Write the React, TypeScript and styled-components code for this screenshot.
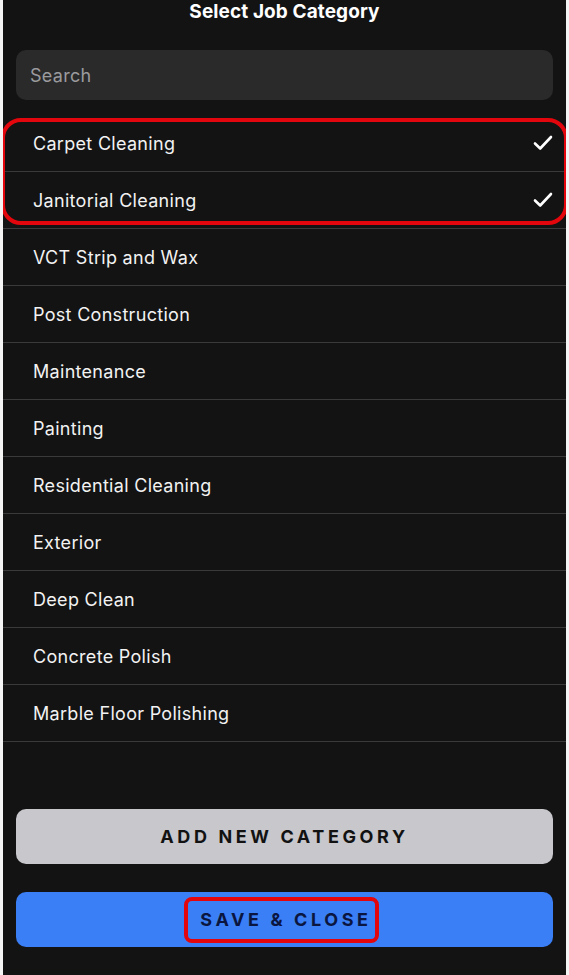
import React from "react";
import styled, { createGlobalStyle } from "styled-components";

const Global = createGlobalStyle`
  html, body { margin: 0; padding: 0; background: #f4f4f4; }
  body { font-family: Inter, "Noto Sans", sans-serif; -webkit-font-smoothing: antialiased; }
`;

const Panel = styled.div`
  margin: 0 3px;
  height: 975px;
  background: #131313;
  display: flex;
  flex-direction: column;
  overflow: hidden;
`;

const Title = styled.div`
  height: 24px;
  line-height: 24px;
  text-align: center;
  color: #ffffff;
  font-size: 19px;
  font-weight: 700;
  letter-spacing: 0.1px;
`;

const Search = styled.div`
  margin: 26px 13px 0;
  height: 50px;
  border-radius: 10px;
  background: #2a2a2b;
  display: flex;
  align-items: center;
  padding: 0 14px;
  color: #9b9b9e;
  font-size: 18px;
  letter-spacing: 0.3px;
`;

const List = styled.div`
  margin-top: 15px;
  display: flex;
  flex-direction: column;
`;

const Group = styled.div`
  position: relative;
  display: flex;
  flex-direction: column;
`;

const Row = styled.div`
  height: 56px;
  border-bottom: 1px solid #3a3a3c;
  display: flex;
  align-items: center;
  justify-content: space-between;
  padding: 0 13px 0 30px;
  color: #f2f2f2;
  font-size: 18px;
  letter-spacing: 0.3px;
`;

const Highlight = styled.div`
  position: absolute;
  top: 3px;
  left: -2px;
  right: -2px;
  height: 99px;
  border: 4px solid #e3060c;
  border-radius: 20px;
  pointer-events: none;
`;

const Spacer = styled.div`
  flex: 1;
`;

const Buttons = styled.div`
  display: flex;
  flex-direction: column;
  gap: 28px;
  padding: 0 13px 28px;
`;

const Button = styled.div<{ $primary?: boolean }>`
  position: relative;
  height: 55px;
  border-radius: 10px;
  background: ${(p) => (p.$primary ? "#3a7ff6" : "#c7c7cc")};
  color: ${(p) => (p.$primary ? "#0a1640" : "#121212")};
  display: flex;
  align-items: center;
  justify-content: center;
  font-size: 18px;
  font-weight: 700;
  letter-spacing: 3.6px;
`;

const Label = styled.span`
  position: relative;
  padding-left: 3px;
`;

const LabelMark = styled.span`
  position: absolute;
  left: -13px;
  right: -7px;
  top: -12px;
  bottom: -13px;
  border: 4px solid #e3060c;
  border-radius: 8px;
`;

const Check = () => (
  <svg width="20" height="16" viewBox="0 0 20 16" fill="none">
    <path d="M2 8.5 L7.2 13.5 L18 2" stroke="#ffffff" strokeWidth="2.6" strokeLinecap="round" strokeLinejoin="round" />
  </svg>
);

const items = [
  "VCT Strip and Wax",
  "Post Construction",
  "Maintenance",
  "Painting",
  "Residential Cleaning",
  "Exterior",
  "Deep Clean",
  "Concrete Polish",
  "Marble Floor Polishing",
];

export default function App() {
  return (
    <>
      <Global />
      <Panel>
        <Title>Select Job Category</Title>
        <Search>Search</Search>
        <List>
          <Group>
            <Row>
              <span>Carpet Cleaning</span>
              <Check />
            </Row>
            <Row>
              <span>Janitorial Cleaning</span>
              <Check />
            </Row>
            <Highlight />
          </Group>
          {items.map((t) => (
            <Row key={t}>
              <span>{t}</span>
            </Row>
          ))}
        </List>
        <Spacer />
        <Buttons>
          <Button>ADD NEW CATEGORY</Button>
          <Button $primary>
            <Label>
              SAVE &amp; CLOSE
              <LabelMark />
            </Label>
          </Button>
        </Buttons>
      </Panel>
    </>
  );
}
